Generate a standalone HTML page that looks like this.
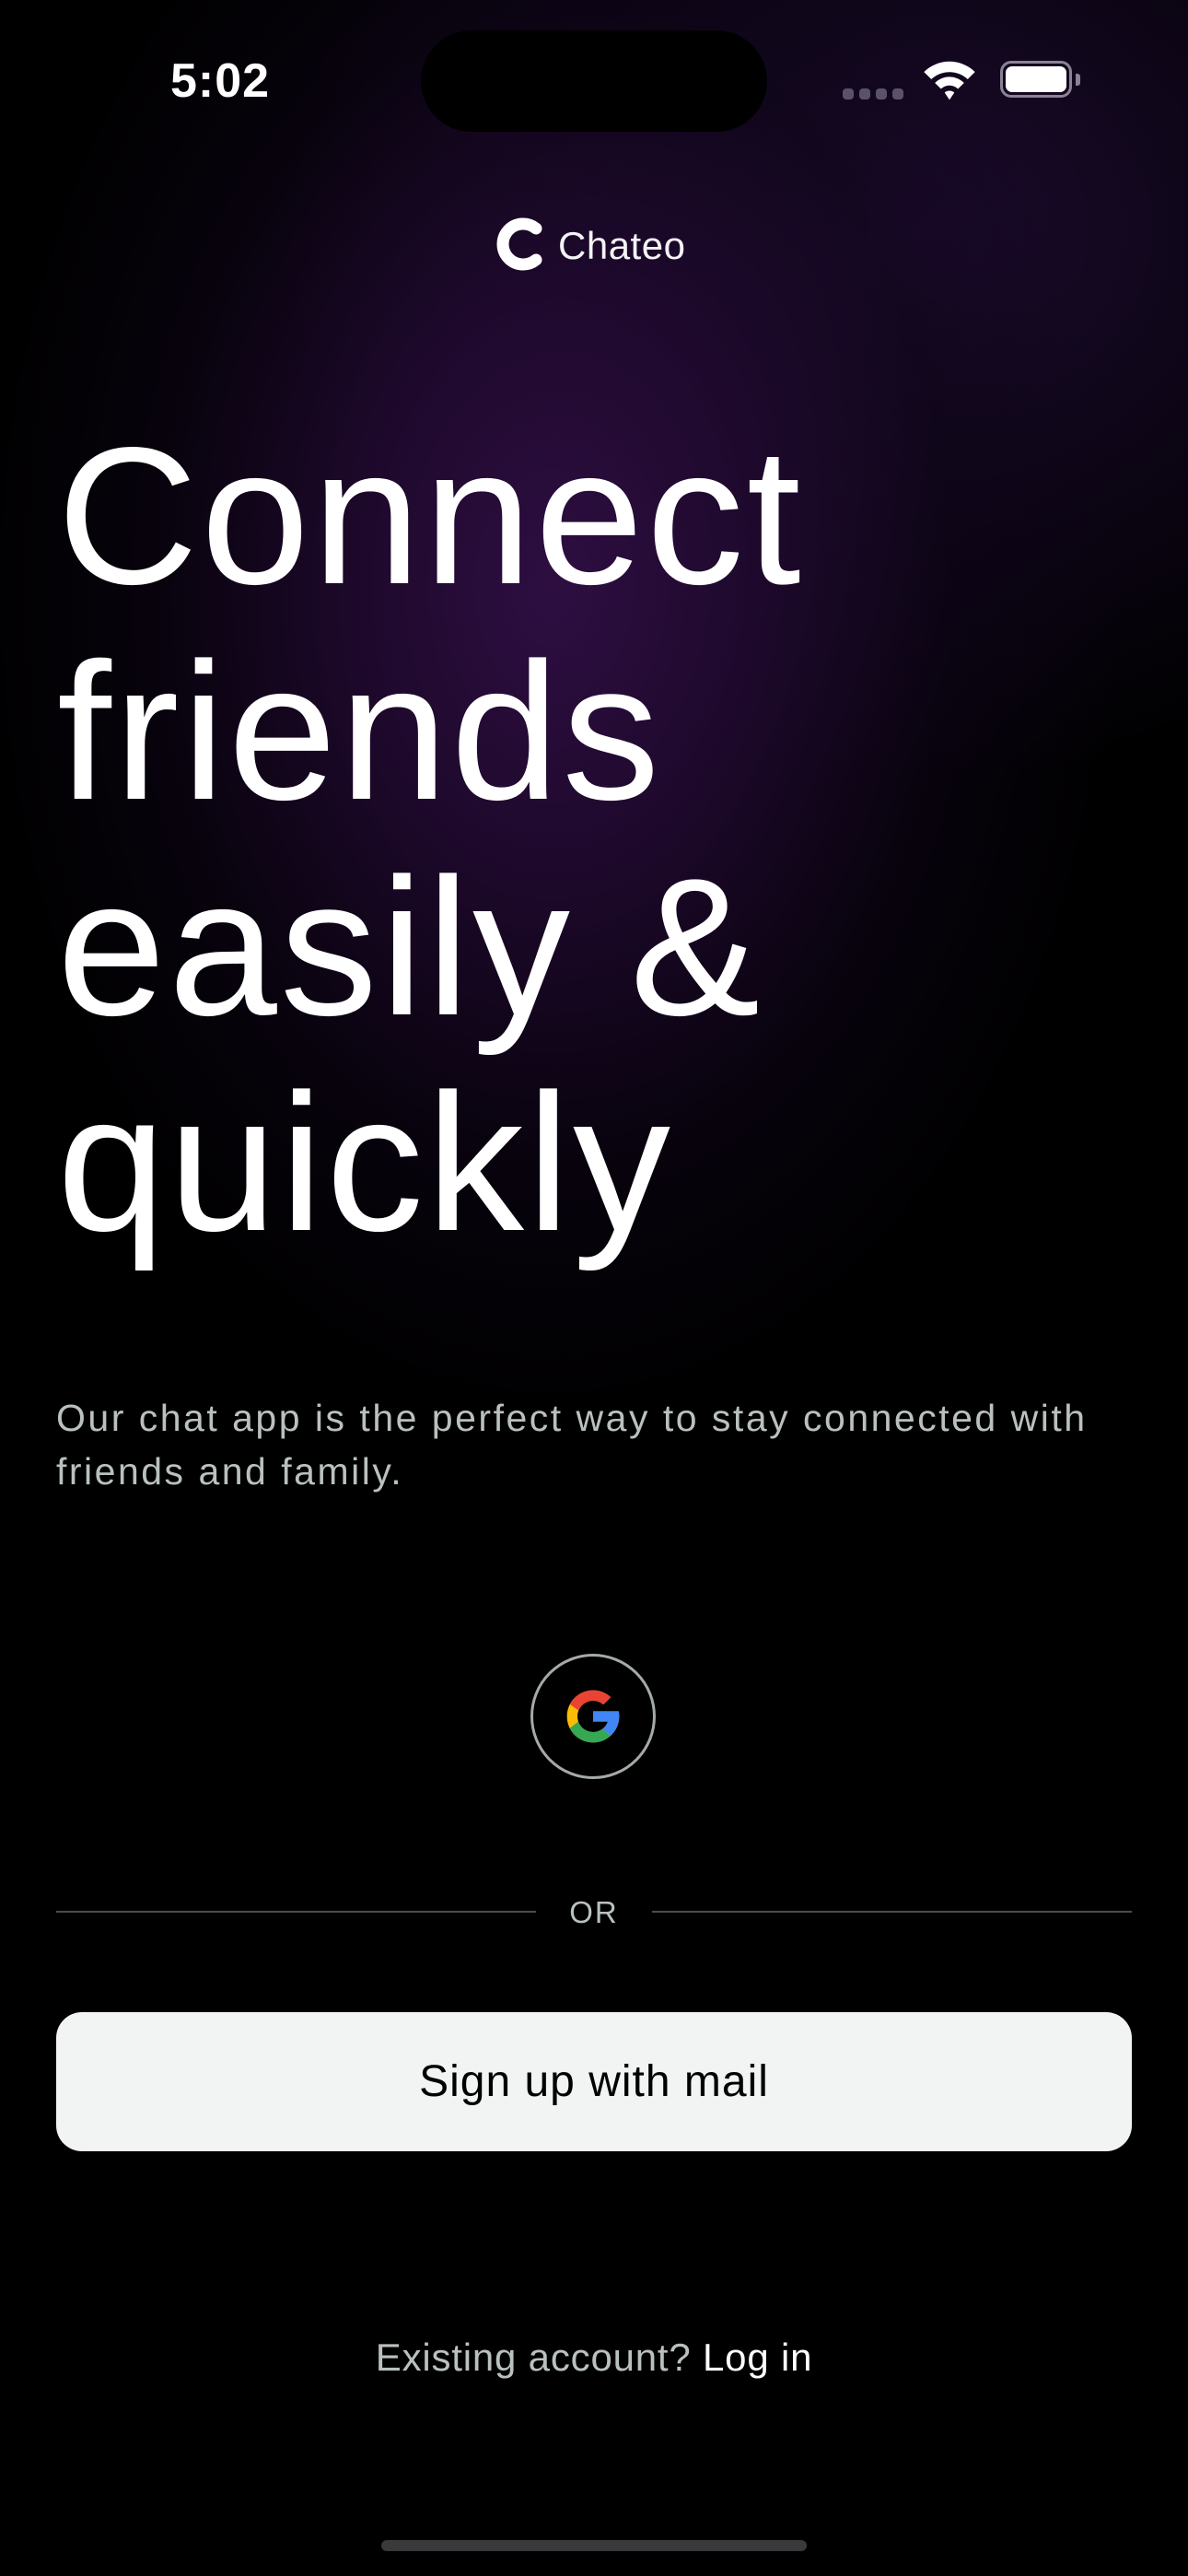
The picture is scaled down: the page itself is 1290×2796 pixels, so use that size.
<!DOCTYPE html>
<html><head><meta charset="utf-8"><style>
html,body{margin:0;padding:0}
body{width:1290px;height:2796px;position:relative;overflow:hidden;background:#000;font-family:"Liberation Sans",sans-serif;color:#fff}
.bg{position:absolute;inset:0;background:
radial-gradient(ellipse 620px 900px at 600px 640px, rgba(46,14,66,1) 0%, rgba(34,10,50,0.85) 35%, rgba(15,5,25,0.5) 70%, rgba(0,0,0,0) 100%),
radial-gradient(ellipse 700px 600px at 1000px 250px, rgba(30,12,50,0.9) 0%, rgba(0,0,0,0) 100%);}
.abs{position:absolute}
</style></head><body>
<div class="bg"></div>
<div class="abs" style="left:185px;top:58px;font-size:52px;font-weight:bold;letter-spacing:1px">5:02</div>
<div class="abs" style="left:457px;top:33px;width:376px;height:110px;border-radius:55px;background:#000"></div>
<div class="abs" style="left:915px;top:96px;width:68px;height:12px">
<span class="abs" style="left:0;width:12px;height:12px;border-radius:4px;background:#5a5268"></span>
<span class="abs" style="left:18px;width:12px;height:12px;border-radius:4px;background:#5a5268"></span>
<span class="abs" style="left:36px;width:12px;height:12px;border-radius:4px;background:#5a5268"></span>
<span class="abs" style="left:54px;width:12px;height:12px;border-radius:4px;background:#5a5268"></span>
</div>
<svg class="abs" style="left:1002px;top:62px" width="58" height="48" viewBox="0 0 44 36">
<path d="M1 12 A30 30 0 0 1 43 12 L37 18 A22 22 0 0 0 7 18Z" fill="#fff"/>
<path d="M10 21 A17 17 0 0 1 34 21 L29 26 A10 10 0 0 0 15 26Z" fill="#fff"/>
<path d="M18 29 A6 6 0 0 1 26 29 L22 35Z" fill="#fff"/>
</svg>
<div class="abs" style="left:1086px;top:66px;width:78px;height:40px;border:3px solid #8a8394;border-radius:12px;box-sizing:border-box"></div>
<div class="abs" style="left:1092px;top:72px;width:66px;height:28px;background:#fff;border-radius:7px"></div>
<div class="abs" style="left:1168px;top:80px;width:5px;height:13px;background:#8a8394;border-radius:0 3px 3px 0"></div>
<svg class="abs" style="left:538px;top:236px" width="52" height="58" viewBox="0 0 52 58">
<path d="M44 12 A22 22 0 1 0 44 46" fill="none" stroke="#fff" stroke-width="13" stroke-linecap="round"/>
</svg>
<div class="abs" style="left:606px;top:243px;font-size:42px;color:#f3f3f6;letter-spacing:0.5px">Chateo</div>
<div class="abs" style="left:62px;top:443px;font-size:212px;line-height:234px;letter-spacing:3px">Connect<br>friends<br>easily &amp;<br>quickly</div>
<div class="abs" style="left:61px;top:1510px;font-size:41px;line-height:58px;color:#b9c1be;letter-spacing:2.5px;width:1250px">Our chat app is the perfect way to stay connected with<br>friends and family.</div>
<div class="abs" style="left:576px;top:1795px;width:136px;height:136px;border:3px solid #a4aaa8;border-radius:50%;box-sizing:border-box"></div>
<svg class="abs" style="left:610px;top:1829px" width="68" height="68" viewBox="0 0 48 48">
<path fill="#FBBC05" d="M43.6 20H24v8h11.3C33.7 32.7 29.2 36 24 36c-6.6 0-12-5.4-12-12s5.4-12 12-12c3 0 5.8 1.1 7.9 3l5.7-5.7C34 6.1 29.3 4 24 4 12.9 4 4 12.9 4 24s8.9 20 20 20 20-8.9 20-20c0-1.3-.1-2.7-.4-4z"/>
<path fill="#EA4335" d="M6.3 14.7l6.6 4.8C14.7 15.1 19 12 24 12c3 0 5.8 1.1 7.9 3l5.7-5.7C34 6.1 29.3 4 24 4 16.3 4 9.7 8.3 6.3 14.7z"/>
<path fill="#34A853" d="M24 44c5.2 0 9.9-2 13.4-5.2l-6.2-5.2C29.2 35.1 26.7 36 24 36c-5.2 0-9.600-3.3-11.3-8l-6.5 5C9.5 39.6 16.2 44 24 44z"/>
<path fill="#4285F4" d="M43.6 20H24v8h11.3c-.8 2.2-2.2 4.2-4.1 5.6l6.2 5.2C37 39.2 44 34 44 24c0-1.3-.1-2.7-.4-4z"/>
</svg>
<div class="abs" style="left:61px;top:2074px;width:521px;height:2px;background:#4a4f4e"></div>
<div class="abs" style="left:708px;top:2074px;width:521px;height:2px;background:#4a4f4e"></div>
<div class="abs" style="left:582px;top:2057px;width:126px;text-align:center;font-size:33px;color:#b9c1be;letter-spacing:2px">OR</div>
<div class="abs" style="left:61px;top:2184px;width:1168px;height:151px;border-radius:28px;background:#f1f4f2;color:#000;font-size:48px;line-height:151px;text-align:center;letter-spacing:1px">Sign up with mail</div>
<div class="abs" style="left:0;top:2535px;width:1290px;text-align:center;font-size:42px;color:#b9c1be;letter-spacing:0.8px">Existing account? <span style="color:#fff">Log in</span></div>
<div class="abs" style="left:414px;top:2757px;width:462px;height:12px;border-radius:6px;background:#3a3a3c"></div>
</body></html>
